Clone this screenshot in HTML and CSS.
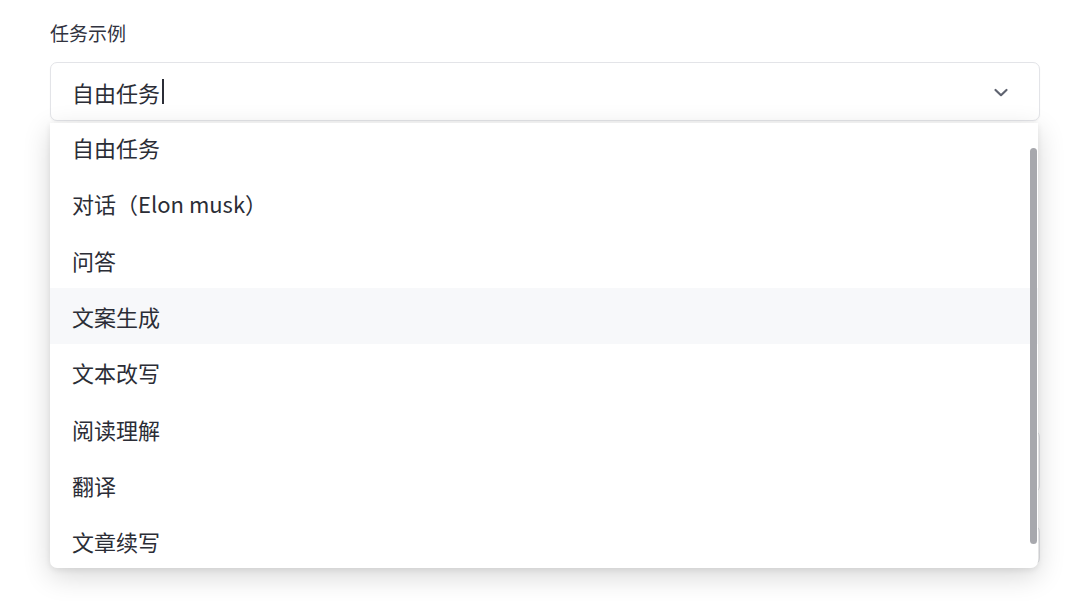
FILE: index.html
```html
<!DOCTYPE html>
<html lang="zh-CN">
<head>
  <meta charset="UTF-8">
  <meta name="viewport" content="width=device-width, initial-scale=1.0">
  <title>任务示例</title>
  <link rel="stylesheet" href="styles.css">
</head>
<body>
  <div class="form">
    <label class="field-label">任务示例</label>

    <div class="select-wrap">
      <div class="select-box">
        <span class="select-value">自由任务</span><span class="caret"></span>
        <svg class="chevron" width="16" height="16" viewBox="0 0 16 16" fill="none">
          <path d="M2.5 5 L8 10.2 L13.5 5" stroke="#5f6370" stroke-width="2.2" stroke-linecap="round" stroke-linejoin="round"/>
        </svg>
      </div>

      <!-- open dropdown list -->
      <div class="dropdown">
        <ul class="options">
          <li>自由任务</li>
          <li>对话（Elon musk）</li>
          <li>问答</li>
          <li class="hover">文案生成</li>
          <li>文本改写</li>
          <li>阅读理解</li>
          <li>翻译</li>
          <li>文章续写</li>
        </ul>
        <div class="scroll-thumb"></div>
      </div>
    </div>

    <!-- fields hidden behind the open list -->
    <div class="field-stub"></div>
    <div class="field-stub short"></div>
  </div>
</body>
</html>
```

FILE: styles.css
```css
* {
  margin: 0;
  padding: 0;
  box-sizing: border-box;
}

html, body {
  min-height: 100%;
  height: 100%;
}

body {
  background: #ffffff;
  font-family: "Noto Sans CJK SC", "Noto Sans", sans-serif;
  color: #262730;
}

.form {
  width: 990px;
  margin-left: 50px;
  padding-top: 19px;
  display: flex;
  flex-direction: column;
}

.field-label {
  font-size: 19px;
  line-height: 28px;
  color: #31333f;
  margin-bottom: 15px;
}

.select-wrap {
  position: relative;
}

.select-box {
  height: 59px;
  border: 1px solid #e3e4e8;
  border-radius: 7px;
  background: #ffffff;
  display: flex;
  align-items: center;
  padding: 0 22px 0 21px;
  box-shadow: 0 1px 2px rgba(0, 0, 0, 0.04);
}

.select-value {
  font-size: 22px;
  color: #2b2d36;
}

.caret {
  width: 1.5px;
  height: 25px;
  background: #2b2d36;
  margin-left: 2px;
}

.chevron {
  margin-left: auto;
  margin-right: 8px;
  margin-top: 2px;
}

/* Dropdown */
.dropdown {
  position: absolute;
  top: 61px;
  left: 0;
  width: 988px;
  height: 445px;
  overflow: hidden;
  background: #ffffff;
  border-radius: 0 0 7px 7px;
  box-shadow: 0 8px 28px rgba(0, 0, 0, 0.16), 0 2px 6px rgba(0, 0, 0, 0.08);
  z-index: 10;
}

.options {
  list-style: none;
  margin-top: -4px;
}

.options li {
  height: 56.3px;
  padding-left: 22px;
  display: flex;
  align-items: center;
  font-size: 22px;
  color: #2b2d36;
}

.options li.hover {
  background: #f7f8fa;
}

.scroll-thumb {
  position: absolute;
  right: 1px;
  top: 25px;
  width: 7px;
  height: 396px;
  border-radius: 4px;
  background: #a7a8ad;
}

.field-stub {
  margin-top: 309px;
  height: 63px;
  border: 1px solid #e3e4e8;
  border-radius: 7px;
}

.field-stub.short {
  margin-top: 32px;
  height: 40px;
}
```
